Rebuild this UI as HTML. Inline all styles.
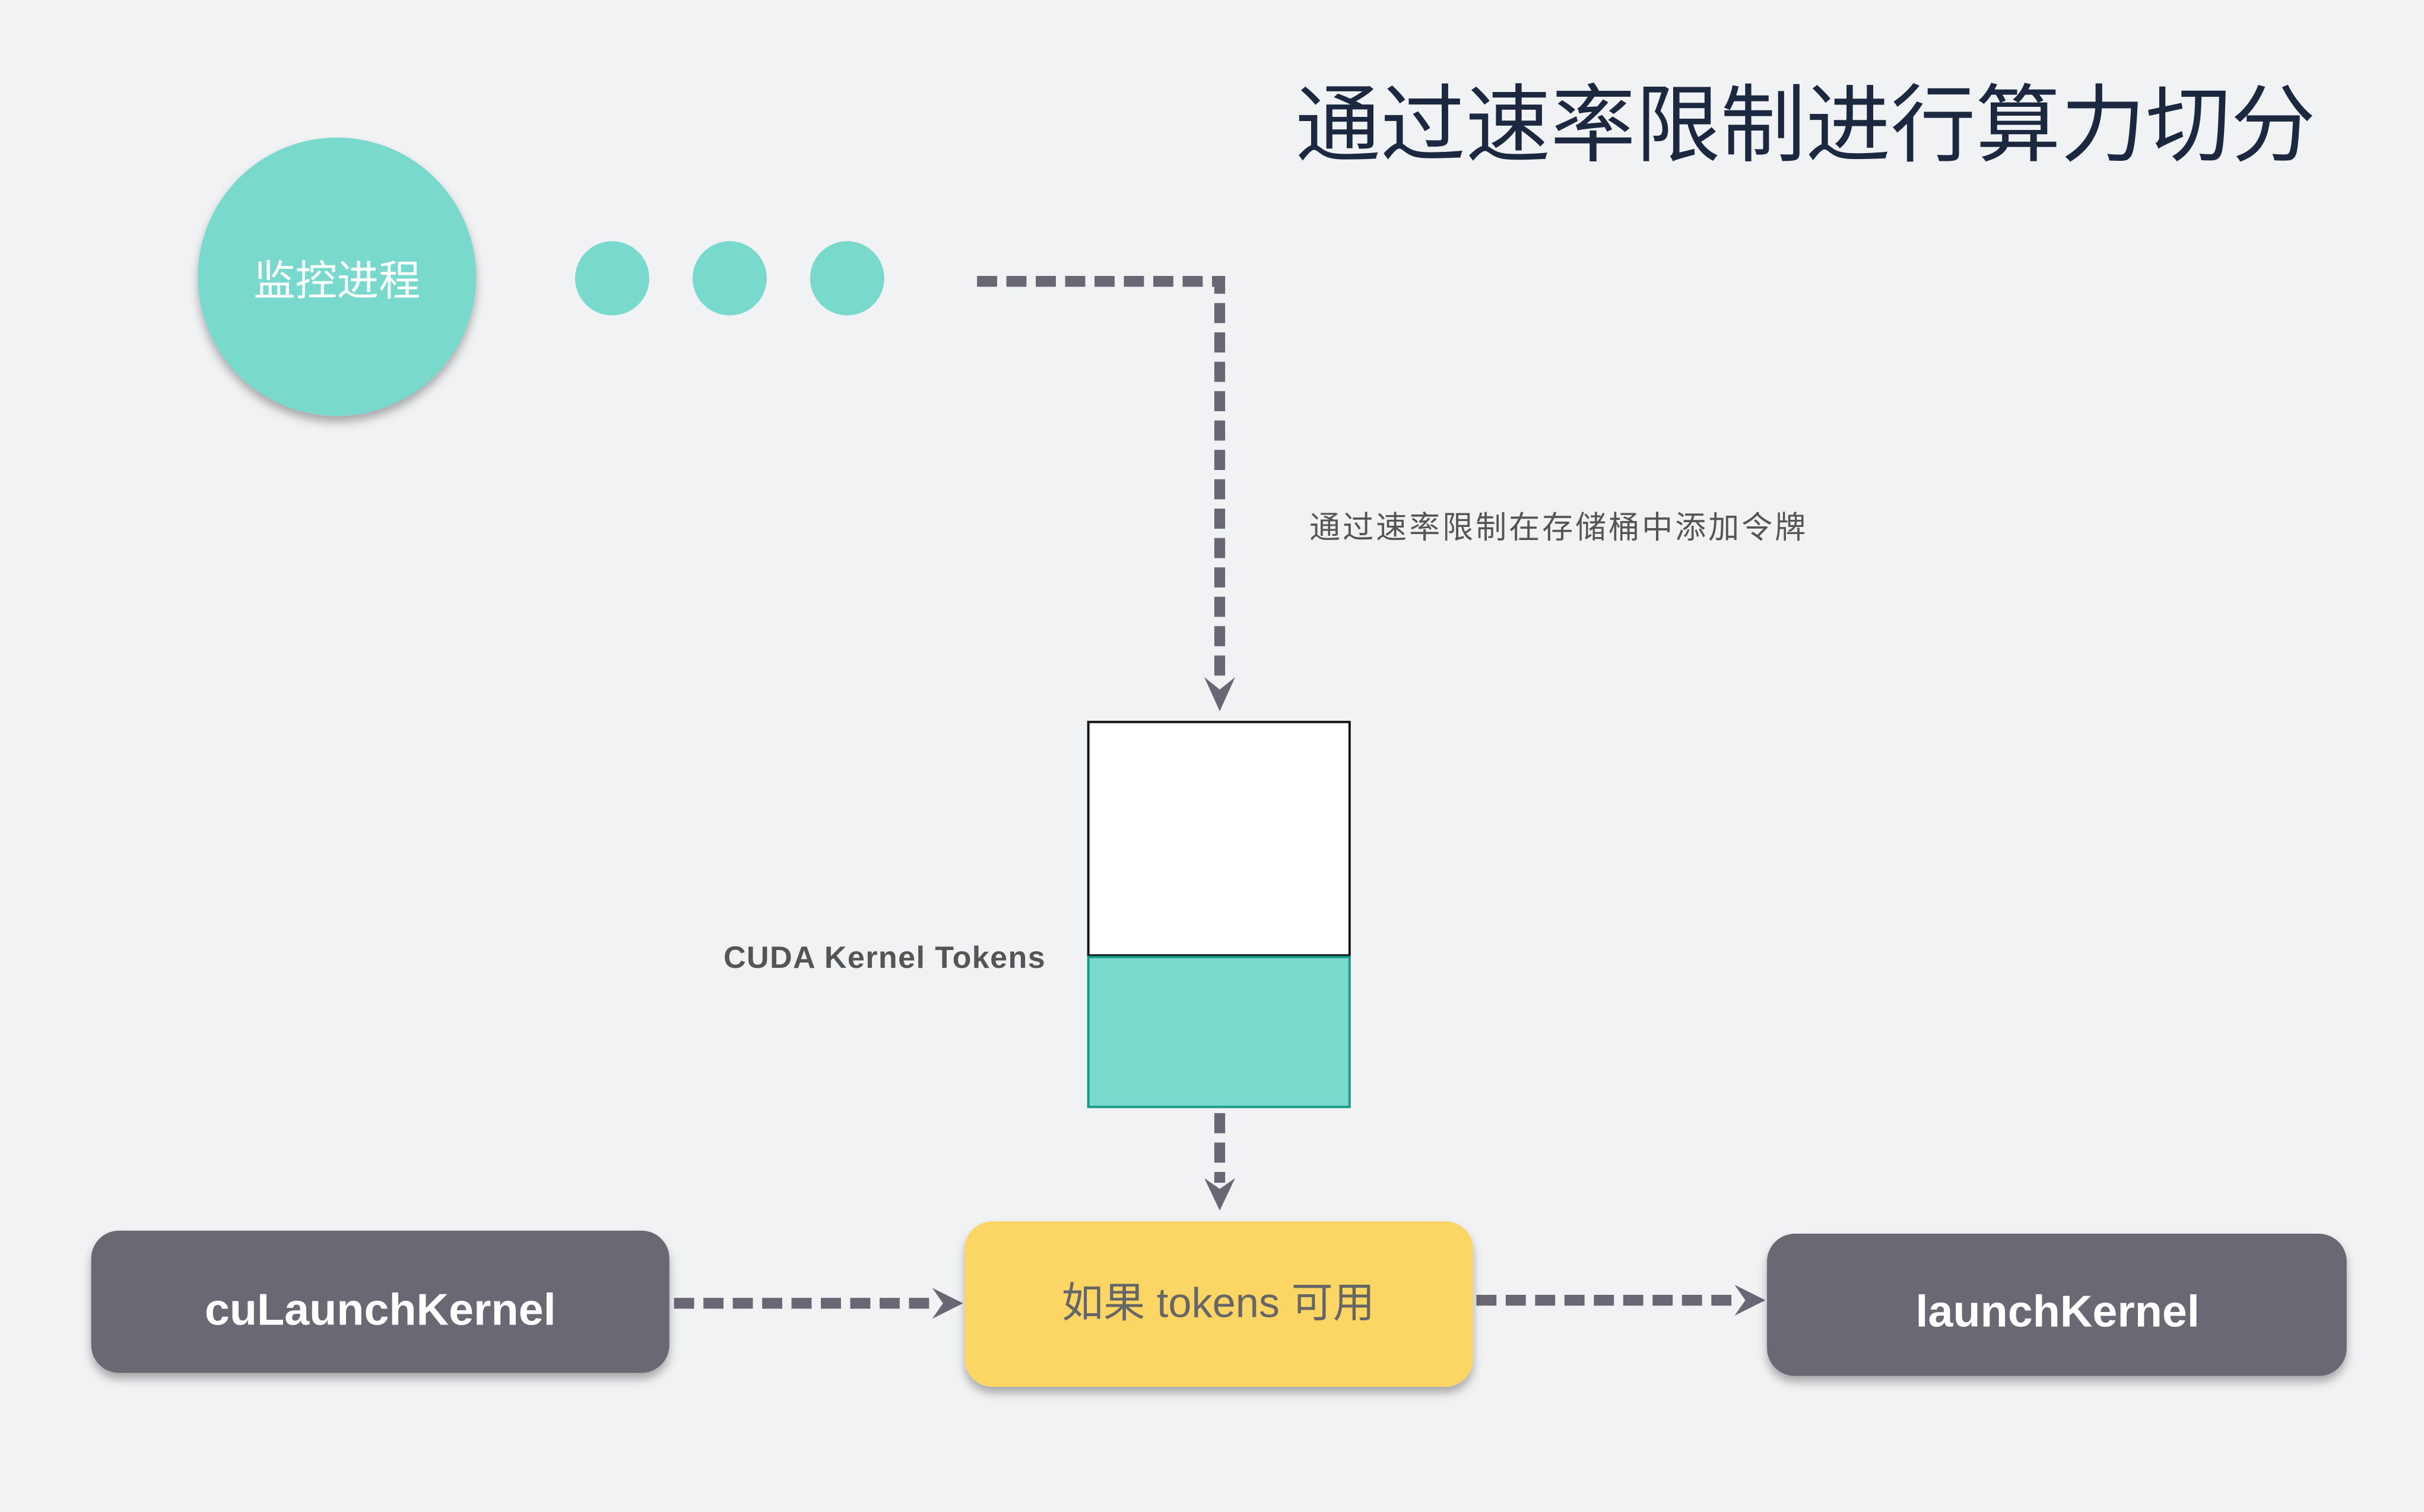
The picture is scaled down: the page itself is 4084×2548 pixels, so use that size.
<!DOCTYPE html>
<html><head><meta charset="utf-8"><style>
html,body{margin:0;padding:0;background:#f0f2f4;}
svg{display:block;}
text{font-family:"Liberation Sans","Noto Sans CJK SC",sans-serif;}
</style></head><body>
<svg width="4084" height="2548" viewBox="0 0 1568 978" preserveAspectRatio="none" xmlns="http://www.w3.org/2000/svg">
<defs>
<filter id="sh" x="-20%" y="-20%" width="140%" height="150%"><feDropShadow dx="0" dy="4" stdDeviation="3" flood-color="#000" flood-opacity="0.3"/></filter>
</defs>
<rect width="1568" height="978" fill="#f0f2f4"/>
<text x="838" y="100" font-size="55" fill="#1c2840" font-family="Noto Sans CJK SC, sans-serif" textLength="660">通过速率限制进行算力切分</text>
<circle cx="218" cy="179" r="90" fill="#79d9cd" filter="url(#sh)"/>
<text x="218" y="191" font-size="27" fill="#fff" text-anchor="middle">监控进程</text>
<circle cx="396" cy="180" r="24" fill="#79d9cd"/>
<circle cx="472" cy="180" r="24" fill="#79d9cd"/>
<circle cx="548" cy="180" r="24" fill="#79d9cd"/>
<g stroke="#696773" stroke-width="7" fill="none" stroke-dasharray="13 6">
<path d="M632 182 H789 V442"/>
<path d="M789 720 V765"/>
<path d="M436 843 H606"/>
<path d="M955 841 H1124"/>
</g>
<g fill="#696773">
<path d="M779 438 L789 460 L799 438 L789 446Z"/>
<path d="M779 762 L789 783 L799 762 L789 769Z"/>
<path d="M603 833 L623 843 L603 853 L610 843Z"/>
<path d="M1122 831 L1142 841 L1122 851 L1129 841Z"/>
</g>
<text x="847" y="348" font-size="20" fill="#555" font-family="Noto Sans CJK SC, sans-serif" textLength="321">通过速率限制在存储桶中添加令牌</text>
<rect x="704" y="467" width="169" height="151" fill="#fff" stroke="#111" stroke-width="1.5"/>
<rect x="704" y="619" width="169" height="97" fill="#79d9cd" stroke="#179a88" stroke-width="1.5"/>
<text x="468" y="626" font-size="20" fill="#555" font-weight="600" textLength="208">CUDA Kernel Tokens</text>
<rect x="59" y="796" width="374" height="92" rx="18" fill="#696773" filter="url(#sh)"/>
<text x="246" y="857" font-size="29" fill="#fff" font-weight="bold" text-anchor="middle">cuLaunchKernel</text>
<rect x="624" y="790" width="329" height="107" rx="18" fill="#fcd665" filter="url(#sh)"/>
<text x="788" y="852" font-size="27" fill="#666" text-anchor="middle">如果 tokens 可用</text>
<rect x="1143" y="798" width="375" height="92" rx="18" fill="#696773" filter="url(#sh)"/>
<text x="1331" y="858" font-size="29" fill="#fff" font-weight="bold" text-anchor="middle">launchKernel</text>
</svg>
</body></html>
